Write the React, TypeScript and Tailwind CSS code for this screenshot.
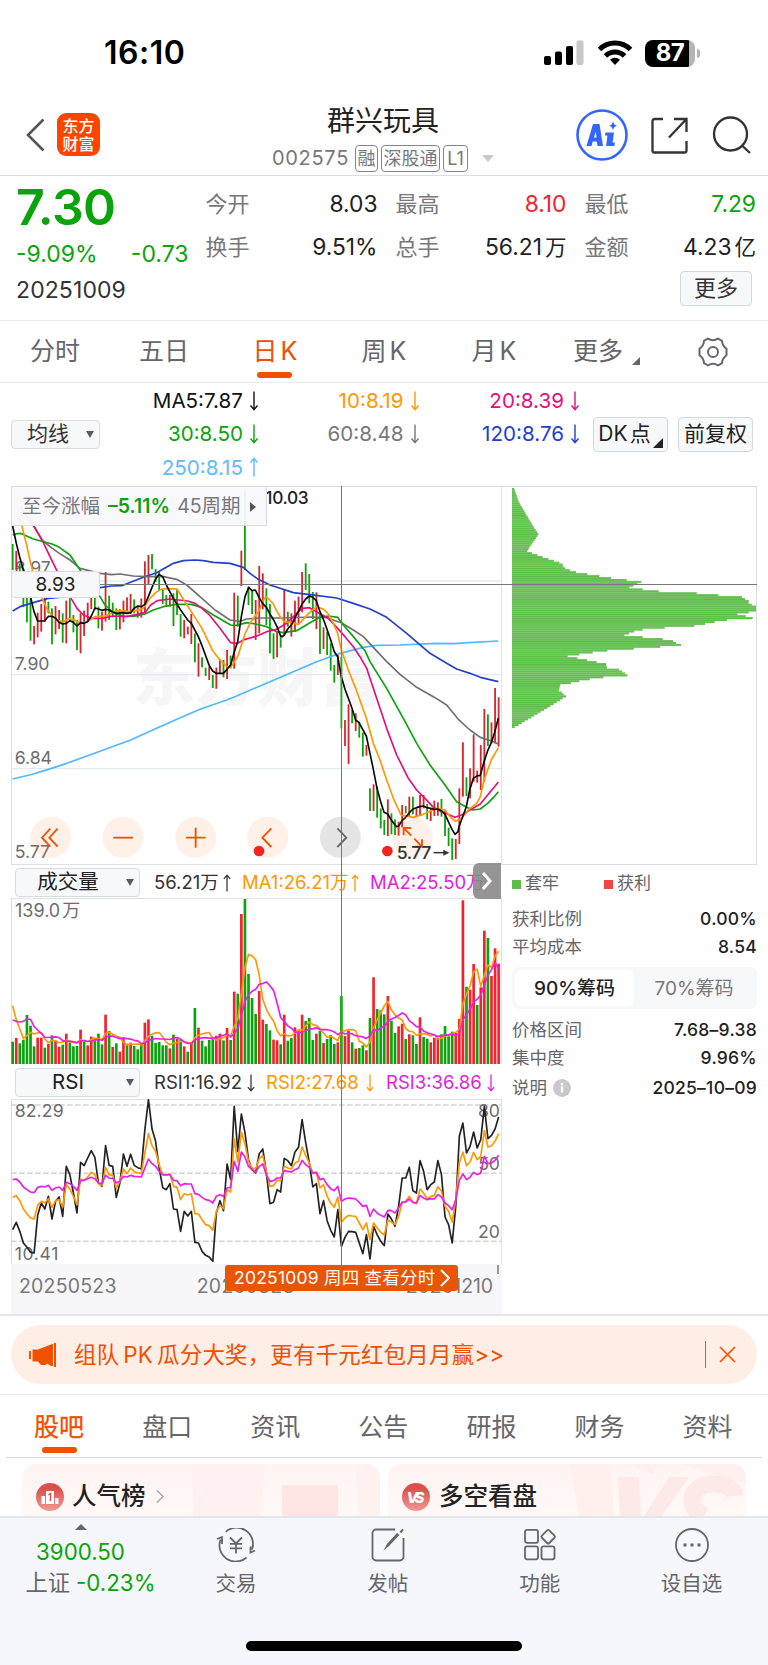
import type { ReactNode } from "react";
import clsx from "clsx";

const RED = "#d8242c";
const GREEN = "#0ba30b";
const PITCH = 10.72;
const FIRST_X = 38;

// one entry per session: direction, high, low (chart units)
const CANDLES = `G192-270 R213-270 G250-340 G270-381 G340-427 G350-482 R438-493 R398-472 R372-455 R350-425
G365-400 G385-493 R378-463 R390-447 G400-488 R362-490 G355-415 G405-457 G420-510 R400-520
R392-468 R368-425 R345-387 G345-390 G380-445 R395-452 R276-425 G347-420 G368-412 G385-450
R388-448 R362-427 R352-402 R342-402 G358-400 R378-413 R355-413 R244-398 R225-312 G222-268
G267-305 G276-332 G330-372 G345-377 R345-380 G340-438 G330-405 G402-470 R420-475 R440-463
R402-492 G460-547 R490-590 G532-562 G563-588 R560-600 G585-624 R563-626 R538-580 G540-592
R510-597 G527-565 R338-566 G347-440 R212-318 G28-270 G320-375 G330-402 R360-480 R258-460
R280-388 G325-435 G372-520 G460-537 R455-532 G465-503 R328-465 G395-440 R400-470 R362-455
R350-430 R276-397 G250-330 G282-370 G336-417 R337-447 G400-522 R442-507 G455-525 G490-572
G555-608 R522-585 G530-745 R720-798 R673-852 G690-730 R700-753 G725-773 G758-830 R795-827
G925-993 R913-993 G920-1013 G985-1045 G1020-1065 R958-1068 G1000-1063 G1018-1065 R1025-1067 R975-1042
G978-1000 R950-1010 G950-1003 R985-1010 R945-1007 R945-985 G972-1018 R985-1023 R962-1008 R967-1007
G957-1010 G990-1068 G1043-1098 G1075-1140 R1077-1137 R925-1092 R787-950 G892-948 R865-955 R763-905
R872-908 R795-930 R687-905 G703-798 R727-790 R624-790 R652-800`.split(/\s+/);

const VOLUME = `G546 R535 G551 G540 G466 G498 G560 R534 R534 G564 R552 G527 R542 R561 G555 R522 G548 G560 G559 R510
G542 R557 R531 G536 G522 G554 R465 G514 R562 G551 R576 R537 G552 R549 G559 G569 G552 R489 R479 G528
G550 G547 G557 G557 R566 G525 R537 G540 R560 G576 R548 G445 R504 G543 G560 G541 G534 R528 R522 G542
R505 G541 R396 G402 R163 G118 G343 G415 G463 R394 R480 G493 G512 R540 R542 G554 R465 G543 G535 R503
R510 R465 G484 G475 G541 R522 G513 R550 G538 G526 G553 R548 G409 R529 R514 G548 R567 G565 G557 R572
G475 R353 G448 G452 G464 R409 G483 G520 R500 R492 G538 R524 G527 G553 R473 G532 G537 R548 R534 R536
G524 G499 G530 G516 R520 R478 R122 G381 R390 R313 G436 R383 R213 G235 R349 R266 R312`.split(/\s+/);

const MA_LINES = [
    { color: "#52b8ff", d: "38,897 100,882 145,868 200,850 300,814 390,781 480,740 560,705 600,688 680,660 710,648 775,620 880,575 950,545 1020,520 1090,502 1130,496 1200,495 1310,490 1360,491 1420,487 1495,483" },
    { color: "#2340cc", d: "38,393 60,380 110,365 145,355 200,350 300,323 335,318 365,317 430,292 470,278 520,250 550,242 585,240 610,242 640,247 690,250 730,262 750,280 775,298 810,315 880,338 930,344 1010,354 1060,370 1110,387 1160,412 1220,460 1290,520 1340,550 1370,567 1410,580 1441,592 1495,605" },
    { color: "#707070", d: "90,115 102,138 124,178 150,200 178,220 210,240 240,265 300,280 335,284 360,282 400,288 440,290 490,290 530,298 560,315 600,350 645,390 690,420 720,424 740,417 780,414 850,414 935,411 980,413 1024,428 1060,450 1090,470 1120,502 1160,545 1200,583 1250,622 1300,650 1340,675 1375,718 1410,750 1441,772 1475,783 1495,792" },
    { color: "#0ba30b", d: "38,165 50,161 65,161 100,177 156,192 178,202 210,225 242,272 300,350 315,375 340,398 370,408 400,409 435,402 460,390 490,380 530,373 574,373 606,383 640,405 692,435 710,436 740,428 767,432 800,440 830,455 850,458 890,452 930,428 960,412 985,408 1013,412 1030,435 1060,470 1095,512 1110,545 1160,625 1210,715 1250,790 1290,855 1335,915 1370,965 1400,982 1418,990 1441,987 1463,970 1480,953 1495,935" },
    { color: "#e2107e", d: "60,80 102,140 124,175 150,230 172,275 210,350 231,385 250,405 274,415 306,415 338,408 381,410 435,398 452,375 472,362 510,357 563,363 585,370 606,385 628,405 660,445 692,488 713,490 735,478 765,470 778,465 800,455 830,448 860,430 895,395 908,385 928,383 949,395 985,415 1013,445 1035,470 1060,500 1080,530 1100,565 1120,625 1140,685 1160,745 1190,825 1225,895 1250,930 1275,955 1298,980 1325,995 1365,1012 1385,1005 1410,990 1441,972 1463,945 1480,925 1495,906" },
    { color: "#ff9800", d: "48,60 65,135 81,200 92,250 98,272 124,350 140,385 156,407 172,420 188,427 205,417 220,418 240,430 263,425 285,410 317,408 349,392 392,395 424,388 435,378 450,355 467,338 483,328 499,326 531,327 542,345 563,378 585,412 606,445 638,512 660,540 681,560 692,563 713,530 735,462 750,430 778,390 790,360 798,350 809,360 820,372 831,395 842,412 853,425 874,427 895,433 910,418 926,400 938,390 949,380 971,388 985,402 1000,430 1013,460 1024,510 1045,570 1067,625 1085,675 1099,715 1120,790 1140,840 1160,900 1180,955 1203,1005 1240,1012 1270,1003 1310,985 1335,990 1350,1010 1367,1024 1385,1015 1410,985 1430,970 1441,950 1452,900 1463,870 1474,840 1495,803" },
    { color: "#0a0a0a", d: "38,138 49,190 60,235 70,270 92,352 102,395 113,423 134,423 145,409 156,409 167,415 177,427 188,432 199,430 210,422 220,427 231,438 242,428 252,430 263,425 274,408 285,384 295,387 306,391 317,388 327,390 338,396 349,400 370,398 381,400 392,398 402,385 413,378 424,380 435,373 445,350 456,322 467,297 477,283 488,290 499,315 520,355 542,390 563,420 574,430 595,470 606,497 628,557 638,573 649,580 670,580 681,568 692,555 703,515 713,485 724,410 735,350 746,322 756,332 766,330 777,352 788,370 799,382 810,402 821,420 831,440 842,468 847,470 853,465 863,447 874,435 885,413 895,395 906,373 917,357 928,348 938,352 949,362 960,395 971,420 981,448 992,480 1003,515 1013,530 1024,590 1035,628 1045,655 1056,685 1067,720 1077,728 1088,748 1099,768 1110,820 1120,868 1131,925 1142,965 1152,997 1163,1002 1174,1020 1185,1035 1190,1040 1196,1038 1206,1022 1217,1012 1228,998 1239,987 1249,983 1260,980 1270,978 1281,983 1292,985 1302,988 1313,987 1324,992 1335,1003 1345,1025 1356,1048 1365,1063 1374,1055 1377,1040 1388,1010 1399,980 1409,930 1420,895 1431,888 1441,886 1452,845 1463,812 1474,788 1484,757 1495,715" },
];

const RSI1 = [
    510, 488, 515, 550, 563, 578, 580, 467, 430, 448, 410, 478, 425, 412, 470, 320, 345, 400, 460, 308, 318, 295, 273, 293, 370, 380, 258, 317, 320, 413, 370, 283, 320, 284,
    317, 324, 328, 210, 120, 208, 245, 325, 384, 390, 372, 448, 450, 515, 455, 469, 455, 548, 550, 575, 587, 592, 605, 460, 423, 453, 313, 360, 140, 275, 163, 218, 300, 330,
    340, 282, 268, 340, 432, 428, 390, 397, 296, 303, 318, 277, 263, 180, 248, 308, 382, 372, 462, 423, 483, 512, 532, 450, 560, 533, 515, 516, 518, 550, 582, 525, 598, 500,
    525, 545, 558, 463, 478, 500, 440, 355, 355, 323, 393, 400, 303, 335, 390, 375, 367, 303, 345, 472, 495, 550, 440, 230, 190, 280, 260, 217, 265, 240, 140, 237, 227, 208, 172,
];
const RSI2 = [
    413, 408, 423, 448, 462, 475, 478, 437, 425, 430, 417, 443, 423, 420, 442, 375, 388, 410, 435, 358, 362, 352, 338, 345, 372, 378, 323, 345, 347, 385, 365, 328, 342, 325,
    336, 340, 340, 280, 222, 258, 275, 315, 345, 347, 343, 380, 383, 420, 402, 406, 402, 462, 463, 480, 495, 498, 512, 455, 437, 447, 390, 397, 237, 307, 218, 252, 305, 325,
    327, 297, 288, 335, 380, 378, 362, 363, 320, 325, 328, 310, 305, 262, 287, 310, 342, 338, 385, 375, 410, 430, 443, 412, 488, 475, 467, 469, 470, 490, 510, 490, 540, 490,
    505, 518, 526, 482, 487, 495, 470, 430, 425, 410, 428, 432, 388, 400, 418, 410, 408, 381, 395, 440, 455, 487, 420, 310, 277, 318, 307, 278, 300, 290, 213, 262, 258, 245, 222,
];
const RSI3 = [
    360, 358, 367, 382, 390, 397, 399, 383, 380, 382, 377, 392, 385, 382, 392, 368, 372, 380, 392, 363, 362, 357, 353, 357, 370, 372, 347, 355, 356, 370, 365, 350, 352, 347,
    350, 351, 352, 325, 298, 312, 320, 335, 345, 346, 344, 362, 363, 378, 372, 373, 373, 402, 404, 413, 420, 422, 430, 410, 405, 410, 385, 383, 305, 335, 277, 292, 320, 330,
    338, 320, 313, 347, 365, 363, 355, 355, 333, 335, 337, 330, 325, 302, 315, 323, 340, 338, 360, 357, 375, 387, 393, 380, 425, 418, 415, 416, 418, 428, 440, 437, 470, 448,
    460, 467, 472, 452, 453, 460, 445, 427, 427, 418, 428, 430, 408, 415, 420, 417, 418, 405, 412, 430, 438, 450, 420, 362, 343, 360, 353, 338, 345, 340, 290, 312, 310, 302, 287,
];

const CHIPS = [
    6, 8, 10, 12, 14, 16, 18, 20, 23, 26, 30, 33, 37, 40, 43, 47, 50, 53, 57, 60, 64, 67, 71, 75, 79, 76, 72, 68, 64, 60, 56, 52, 49, 46,
    60, 76, 92, 109, 126, 142, 152, 154, 160, 174, 192, 226, 262, 297, 344, 388, 376, 364, 352, 392, 440, 554, 619, 690, 699, 710, 710, 719,
    732, 732, 732, 710, 676, 701, 722, 645, 608, 579, 547, 458, 392, 367, 351, 337, 392, 452, 483, 492, 507, 445, 365, 286, 242, 202, 167,
    196, 225, 254, 282, 283, 285, 321, 330, 339, 346, 274, 233, 202, 177, 145, 143, 142, 140, 149, 155, 162, 152, 144, 134, 125, 115, 106,
    96, 86, 77, 67, 58, 48, 38, 29, 19, 8,
];

const xAt = (i: number) => FIRST_X + i * PITCH;
const toPoints = (ys: number[]) => ys.map((y, i) => `${xAt(i).toFixed(1)},${y.toFixed(1)}`).join(" ");

function average(period: number, seed: number[]) {
    const tops = VOLUME.map((v) => Number(v.slice(1)));
    return tops.map((_, i) => {
        if (i < period - 1) return seed[i];
        const part = tops.slice(i - period + 1, i + 1);
        return part.reduce((a, b) => a + b, 0) / period;
    });
}

const VOL_MA5 = average(5, [438, 480, 508, 536]);
const VOL_MA10 = average(10, [481, 485, 487, 485, 478, 479, 500, 511, 521]);

function Arrow({ up, className }: { up?: boolean; className?: string }) {
    return (
        <svg viewBox="0 0 10 20" className={clsx("w-2.5 shrink-0", className)} fill="none" stroke="currentColor" strokeWidth="1.400">
            {up ? <path d="M5 19.5V1.5M1.500 5.500l3.500-4.200L8.500 5.500" /> : <path d="M5 .5v18M1.500 14.500l3.500 4.200L8.500 14.500" />}
        </svg>
    );
}

function Caret() {
    return <span className="h-0 w-0 border-x-4 border-t-[7px] border-x-transparent border-t-[#5b5b60]" />;
}

function StatusBar() {
    return (
        <div className="flex h-[104px] items-center justify-between pl-[104px] pr-[68px] pt-[2px]">
            <span className="text-[32px] font-semibold tracking-[0.5px] text-black">16:10</span>
            <div className="flex items-center">
                <svg width="40" height="26" viewBox="0 0 40 26">
                    <rect x="0" y="16" width="7" height="9" rx="2" />
                    <rect x="11" y="11.500" width="7" height="13.500" rx="2" />
                    <rect x="22" y="6" width="7" height="19" rx="2" />
                    <rect x="32.500" y="0.500" width="7" height="24.500" rx="2" fill="#c8c8c8" />
                </svg>
                <svg className="ml-[13px]" width="36" height="26" viewBox="0 0 36 26" fill="none" stroke="#000" strokeWidth="5">
                    <path d="M2.500 9.500a22 22 0 0 1 31 0" />
                    <path d="M8.500 16a13.500 13.500 0 0 1 19 0" />
                    <path d="M18 25l-5-5.300a7.200 7.200 0 0 1 10 0z" fill="#000" stroke="none" />
                </svg>
                <div className="ml-3 flex h-[27px] w-[50px] items-center justify-center rounded-[8px] bg-[linear-gradient(to_right,#000_88%,#b5b5b5_88%)] text-[24px] font-bold tracking-[-0.5px] text-white">
                    87
                </div>
                <span className="ml-[2px] h-[9px] w-[3px] rounded-r-full bg-[#b5b5b5]" />
            </div>
        </div>
    );
}

function Header() {
    const tag = "mr-[3px] h-[27px] rounded-[4px] border border-[#85858a] px-[1.500px] text-[18px] leading-[25px]";
    return (
        <div className="relative flex h-[72px] items-center border-b border-[#dcdce0] px-[25px]">
            <svg className="-mt-[9px]" width="20" height="34" viewBox="0 0 20 34" fill="none" stroke="#555" strokeWidth="2.600">
                <path d="M18.500 1.500 3 17l15.500 15.500" />
            </svg>
            <div className="-mt-[10px] ml-3 flex h-[43px] w-[43px] flex-col items-center justify-center rounded-[9px] bg-[#ff4400] text-[16px] font-medium leading-[18px] text-white">
                <span>东方</span>
                <span>财富</span>
            </div>
            <div className="absolute left-[264px] top-0 flex w-[238px] flex-col items-center">
                <div className="h-[34px] text-[28px] leading-[34px] text-[#222]">群兴玩具</div>
                <div className="mt-[6px] flex h-7 items-center text-[20px] text-[#77777c]">
                    <span className="mr-[6px] tracking-[0.7px]">002575</span>
                    <span className={tag}>融</span>
                    <span className={tag}>深股通</span>
                    <span className={clsx(tag, "mr-0 w-[25px] text-center")}>L1</span>
                    <span className="ml-[11px] h-0 w-0 border-x-[6px] border-t-[7px] border-x-transparent border-t-[#c9c9cc]" />
                </div>
            </div>
            <div className="-mt-[9px] ml-auto mr-[-9px] flex items-center">
                <svg width="52" height="52" viewBox="0 0 52 52">
                    <circle cx="26" cy="26" r="24.500" fill="none" stroke="#3365ff" strokeWidth="2.600" />
                    <path d="M10.500 37 17 15h6.500L27 37h-5.500l-.7-4.500h-4L15.500 37zM18 28.500h2.500l-.7-6zM32.500 23.500h-3l-.6 3h2.500l-1.300 10.500h8.300l.5-3.500h-2.300l1.400-10zM37 12c.7 3 1.500 4 4 4.800-2.500.8-3.300 1.800-4 4.700-.7-2.900-1.500-3.900-4-4.700 2.500-.8 3.300-1.800 4-4.800z" fill="#3365ff" />
                </svg>
                <svg className="ml-[23px]" width="37" height="37" viewBox="0 0 37 37" fill="none" stroke="#333" strokeWidth="2.300">
                    <path d="M12 2H3.500A2 2 0 0 0 1.500 4v29.500a2 2 0 0 0 2 2h30a2 2 0 0 0 2-2V24M23 2h12.500v13M35 2.500 18 20.500" />
                </svg>
                <svg className="ml-6" width="40" height="38" viewBox="0 0 40 38" fill="none" stroke="#333" strokeWidth="2.300">
                    <circle cx="18.500" cy="18" r="16.500" />
                    <path d="m30 29.500 8 7.500" />
                </svg>
            </div>
        </div>
    );
}

const STATS = [
    { label: "今开", value: "8.03", color: "text-[#222]" },
    { label: "最高", value: "8.10", color: "text-[#f5222d]" },
    { label: "最低", value: "7.29", color: "text-[#0ba30b]" },
    { label: "换手", value: "9.51%", color: "text-[#222]" },
    { label: "总手", value: "56.21", unit: "万", color: "text-[#222]" },
    { label: "金额", value: "4.23", unit: "亿", color: "text-[#222]" },
];

function Quote() {
    return (
        <div className="flex h-[145px] border-b border-[#ececef] pl-4 pr-[12px]">
            <div className="w-[172px] text-[#0ba30b]">
                <div className="mt-[6px] h-[50px] text-[50px] font-semibold leading-[51px] tracking-[-0.7px]">7.30</div>
                <div className="mt-[7px] flex h-[30px] items-center justify-between text-[23px]">
                    <span>-9.09%</span>
                    <span className="mr-[-1px]">-0.73</span>
                </div>
                <div className="mt-[6px] text-[23px] leading-[30px] tracking-[0.1px] text-[#333]">20251009</div>
            </div>
            <div className="ml-[18px] flex flex-1 flex-col">
                <div className="mt-[7px] grid grid-cols-[172px_171px_171.5px] gap-x-[18px] text-[22px]">
                    {STATS.map((s) => (
                        <div key={s.label} className="flex h-[43px] items-center justify-between whitespace-nowrap">
                            <span className="text-[#77777c]">{s.label}</span>
                            <span className={clsx("text-[22.800px]", s.color)}>
                                {s.value}
                                {s.unit && <span className="ml-[3px] text-[21.500px]">{s.unit}</span>}
                            </span>
                        </div>
                    ))}
                </div>
                <div className="mr-1 mt-[2px] flex h-[35px] w-[72px] items-center justify-center self-end rounded-[4px] border border-[#d5d7df] bg-[#f7f8fa] text-[22px] text-[#333]">更多</div>
            </div>
        </div>
    );
}

function PeriodTabs() {
    const tab = "w-[110px] text-center text-[25px]";
    return (
        <div className="flex h-[62px] items-center border-b border-[#ececef] text-[#66666a]">
            <span className={tab}>分时</span>
            <span className={clsx(tab, "-ml-px")}>五日</span>
            <span className={clsx(tab, "relative ml-px text-[#f05000]")}>
                日<span className="ml-[3px]">K</span>
                <i className="absolute -bottom-[8px] left-[37px] h-[6px] w-[35px] rounded-[3px] bg-[#f05000]" />
            </span>
            <span className={clsx(tab, "-ml-px")}>周<span className="ml-[3px]">K</span></span>
            <span className={tab}>月<span className="ml-[3px]">K</span></span>
            <span className={clsx(tab, "-ml-[6px]")}>更多</span>
            <svg className="-ml-[21px] mt-[18px]" width="8" height="8" viewBox="0 0 8 8" fill="#66666a">
                <path d="M8 0v8H0z" />
            </svg>
            <svg className="ml-[58px]" width="30" height="30" viewBox="0 0 30 30" fill="none" stroke="#66666a" strokeWidth="2">
                <path d="M10 1.500c3 2 7 2 10 0l4 2.300c.2 4 1.600 6 4.500 8v6.400c-2.900 2-4.300 4-4.500 8L20 28.500c-3-2-7-2-10 0l-4-2.300c-.2-4-1.600-6-4.500-8v-6.400c2.900-2 4.300-4 4.500-8z" strokeLinejoin="round" />
                <circle cx="15" cy="15" r="5" />
            </svg>
        </div>
    );
}

function MaLegend() {
    const button = "relative flex h-[35px] w-[75px] items-center justify-center rounded-[4px] border border-[#d5d7df] bg-[#f7f8fa] text-[21px] text-[#222]";
    const item = (text: string, color: string, up = false) => (
        <span className={clsx("flex items-center justify-end", color)}>
            {text}
            <Arrow up={up} className="ml-[6px] h-5" />
        </span>
    );
    return (
        <div className="flex h-[104px] items-center pl-[11px] pr-[15px]">
            <div className="flex h-[29px] w-[89px] items-center justify-between rounded-[4px] border border-[#d9dbe2] bg-[#f7f8fa] pl-[15px] pr-[5px] text-[21px] text-[#333]">
                均线
                <Caret />
            </div>
            <div className="grid w-[480px] grid-cols-[159px_160.5px_160.5px] text-[20.600px] leading-[33.300px]">
                {item("MA5:7.87", "text-[#111]")}
                {item("10:8.19", "text-[#ff9800]")}
                {item("20:8.39", "text-[#e2107e]")}
                {item("30:8.50", "text-[#0ba30b]")}
                {item("60:8.48", "text-[#77777c]")}
                {item("120:8.76", "text-[#2340cc]")}
                {item("250:8.15", "text-[#5cbcff]", true)}
            </div>
            <div className={clsx(button, "ml-[13px] pr-[12px]")}>
                DK<span className="ml-[2px]">点</span>
                <svg className="absolute bottom-[3px] right-[4px]" width="10" height="10" viewBox="0 0 10 10">
                    <path d="M10 0v10H0z" fill="#222" />
                </svg>
            </div>
            <div className={clsx(button, "ml-[10px]")}>前复权</div>
        </div>
    );
}

const ROUND_BUTTONS = [
    { cx: 153, d: "M151 1046l-25 27 25 27M173 1046l-25 27 25 27" },
    { cx: 369, d: "M340 1073h59" },
    { cx: 587, d: "M558 1073h59M587 1043v60" },
    { cx: 803, d: "M814 1045l-27 28 27 28" },
    { cx: 1021, d: "M1012 1045l27 28-27 28", dim: true },
    { cx: 1237, d: "M1234 1067l-22-22M1211 1066v-22h22M1243 1076l22 23M1266 1078v22h-22" },
];

function CandleChart() {
    return (
        <svg viewBox="33 18 1473 1134" className="h-[378px] w-[491px]" fontFamily="Inter, 'Noto Sans CJK SC', sans-serif">
            <text x="398" y="663" fontSize="187" fontWeight="900" fill="#f6f6f7">东方财富</text>
            <path d="M33 303H1503M33 584H1503M33 866H1503" stroke="#e6eaf0" strokeWidth="4" />
            <g fontSize="53" fill="#6c6c70">
                <text x="44" y="281">8.97</text>
                <text x="44" y="571">7.90</text>
                <text x="44" y="853">6.84</text>
                <text x="44" y="1135">5.77</text>
            </g>
            {CANDLES.map((c, i) => {
                const [high, low] = c.slice(1).split("-").map(Number);
                return <rect key={i} x={xAt(i) - 2.7} y={high} width="5.400" height={low - high} fill={c[0] === "R" ? RED : GREEN} />;
            })}
            {MA_LINES.map((line) => (
                <polyline key={line.color} points={line.d} fill="none" stroke={line.color} strokeWidth="5" strokeLinejoin="round" />
            ))}
            {ROUND_BUTTONS.map((b) => (
                <g key={b.cx} fill="none">
                    <circle cx={b.cx} cy="1072" r="61.500" fill={b.dim ? "#000" : "#ff5a00"} fillOpacity={b.dim ? 0.1 : 0.09} />
                    <path d={b.d} stroke={b.dim ? "#666" : "#f05000"} strokeWidth="5.500" />
                </g>
            ))}
            <circle cx="777" cy="1113" r="16" fill="#f9231e" />
            <circle cx="1162" cy="1113" r="16" fill="#f9231e" />
            <text x="1190" y="1137" fontSize="53" fontWeight="500" fill="#333" textLength="104">5.77</text>
            <path d="M1301 1118h38" stroke="#333" strokeWidth="4.500" />
            <path d="M1348 1118l-18-9v18z" fill="#333" />
            <text x="796" y="71" fontSize="52" fontWeight="500" fill="#222" textLength="130">10.03</text>
        </svg>
    );
}

function VolumeChart() {
    return (
        <svg viewBox="33 115 1473 498" className="h-[166px] w-[491px]">
            {VOLUME.map((v, i) => {
                const top = Number(v.slice(1));
                return <rect key={i} x={xAt(i) - 4} y={top} width="8" height={613 - top} fill={v[0] === "R" ? "#f5222d" : GREEN} />;
            })}
            <polyline points={toPoints(VOL_MA5)} fill="none" stroke="#ff9800" strokeWidth="5" strokeLinejoin="round" />
            <polyline points={toPoints(VOL_MA10)} fill="none" stroke="#e91ee9" strokeWidth="5" strokeLinejoin="round" />
        </svg>
    );
}

function RsiChart() {
    return (
        <svg viewBox="33 118 1473 495" className="h-[165px] w-[491px]" fontFamily="Inter, sans-serif">
            <path d="M33 136H1503M33 341H1503M33 545H1503" stroke="#d3d3d5" strokeWidth="4.500" strokeDasharray="17 7" />
            <g fontSize="53" fill="#6c6c70">
                <text x="44" y="172" textLength="147">82.29</text>
                <text x="44" y="602" textLength="131">10.41</text>
                <text x="1500" y="172" textAnchor="end">80</text>
                <text x="1500" y="331" textAnchor="end">50</text>
                <text x="1500" y="534" textAnchor="end">20</text>
            </g>
            <g fill="none" strokeWidth="5" strokeLinejoin="round">
                <polyline points={toPoints(RSI1)} stroke="#222" />
                <polyline points={toPoints(RSI2)} stroke="#ff9800" />
                <polyline points={toPoints(RSI3)} stroke="#e91ee9" />
            </g>
        </svg>
    );
}

function IndicatorBar({ name, children }: { name: string; children: ReactNode }) {
    return (
        <div className="flex h-[33px] items-center pl-1 pt-[2px]">
            <div className="relative flex h-[29px] w-[125px] shrink-0 items-center justify-center rounded-[4px] border border-[#d9dbe2] bg-[#f7f8fa] pr-[19px] text-[20.500px] text-[#222]">
                {name}
                <span className="absolute right-[5px] top-[10px] flex"><Caret /></span>
            </div>
            {children}
        </div>
    );
}

function ChipPanel() {
    const row = (label: ReactNode, value: string) => (
        <div className="flex h-7 items-center justify-between">
            <span className="flex items-center text-[#66666a]">{label}</span>
            <span className="font-medium tracking-[0.25px] text-[#222]">{value}</span>
        </div>
    );
    return (
        <div className="w-[255px] text-[17.500px]">
            <div className="h-[379px] border-y border-r border-[#d9dbe5] pl-[10px] pt-px">
                <svg viewBox="36 24 738 1125" className="h-[375px] w-[246px]">
                    {CHIPS.map((w, k) => (
                        <g key={k}>
                            <rect x="36" y={22 + k * 5.73} width={w} height="5.800" fill={k % 2 ? "#61bf4d" : "#5dbd49"} />
                            <rect x="36" y={22 + k * 5.73} width={w} height="2" fill="#72c761" />
                        </g>
                    ))}
                </svg>
            </div>
            <div className="pl-[10px]">
                <div className="mt-[5px] flex h-[28px] items-center text-[17px] text-[#66666a]">
                    <i className="mr-1 h-[9px] w-[9px] bg-[#5dbd49]" />套牢
                    <i className="ml-[45px] mr-1 h-[9px] w-[9px] bg-[#ee4545]" />获利
                </div>
                <div className="mt-[7px]">
                    {row("获利比例", "0.00%")}
                    {row("平均成本", "8.54")}
                </div>
                <div className="mt-[6px] flex h-[42px] rounded-[7px] bg-[#f7f8fa] p-[3px] text-[19px] leading-[37px]">
                    <span className="w-[119px] rounded-[6px] bg-white text-center font-medium text-[#222]">90%筹码</span>
                    <span className="flex-1 text-center text-[#77777c]">70%筹码</span>
                </div>
                <div className="mt-[7px]">
                    {row("价格区间", "7.68–9.38")}
                    {row("集中度", "9.96%")}
                    <div className="mt-[2px]">
                        {row(
                            <>
                                说明
                                <svg className="ml-[6px]" width="18" height="18" viewBox="0 0 18 18">
                                    <circle cx="9" cy="9" r="9" fill="#c9c9cc" />
                                    <path d="M9 4v2.500M9 7.500v6" stroke="#fff" strokeWidth="2.200" />
                                </svg>
                            </>,
                            "2025–10–09",
                        )}
                    </div>
                </div>
            </div>
        </div>
    );
}

function Charts() {
    return (
        <div className="relative flex h-[828px] pl-[11px]">
            <div className="w-[491px]">
                <div className="h-[379px] border-b border-[#dfe0e6] shadow-[inset_0_1px_#d9dbe5,inset_1px_0_#d9dbe5,inset_-1px_0_#e2e3e8]">
                    <CandleChart />
                </div>
                <IndicatorBar name="成交量">
                    <div className="flex items-center whitespace-nowrap text-[18.500px] text-[#333]">
                        <span className="ml-[14px] w-[63px]">56.21万</span>
                        <Arrow up className="ml-[5px] h-[18px]" />
                        <span className="ml-[10px] w-[104px] text-[#ff9800]">MA1:26.21万</span>
                        <Arrow up className="ml-[4px] h-[18px] text-[#ff9800]" />
                        <span className="ml-[10px] w-[110px] text-[#e01ee0]">MA2:25.50万</span>
                        <Arrow up className="h-[18px] text-[#e01ee0]" />
                    </div>
                </IndicatorBar>
                <div className="relative h-[166px] shadow-[inset_0_1px_#e2e3e8,inset_1px_0_#d9dbe5,inset_-1px_0_#e2e3e8]">
                    <VolumeChart />
                    <span className="absolute left-1 top-[1px] text-[18px] leading-[23px] text-[#6c6c70]">139.0<span className="ml-[2px]">万</span></span>
                </div>
                <div className="py-[1px]">
                    <IndicatorBar name="RSI">
                        <div className="flex items-center whitespace-nowrap text-[18.500px] text-[#333]">
                            <span className="ml-[14px] w-[87px]">RSI1:16.92</span>
                            <Arrow className="ml-[5px] h-[18px]" />
                            <span className="ml-[10px] w-[93px] text-[#ff9800]">RSI2:27.68</span>
                            <Arrow className="ml-[6px] h-[18px] text-[#ff9800]" />
                            <span className="ml-[11px] w-[96px] text-[#e01ee0]">RSI3:36.86</span>
                            <Arrow className="ml-[4px] h-[18px] text-[#e01ee0]" />
                        </div>
                    </IndicatorBar>
                </div>
                <div className="h-[165px] shadow-[inset_0_1px_#e2e3e8,inset_1px_0_#d9dbe5,inset_-1px_0_#e2e3e8]">
                    <RsiChart />
                </div>
                <div className="flex h-[50px] justify-between bg-[#f7f7fa] pl-[8px] pr-[9px] text-[19.500px] leading-[44px] tracking-[0.2px] text-[#77777c]">
                    <span>20250523</span>
                    <span className="mr-[31px]">20250828</span>
                    <span className="tracking-[-0.1px]">20251210</span>
                </div>
            </div>
            <ChipPanel />

            {/* crosshair */}
            <div className="absolute left-[11px] top-[98px] h-px w-[746px] bg-[#777]" />
            <div className="absolute left-[341px] top-0 h-[779px] w-px bg-[#777]" />
            <div className="absolute left-[11px] top-[85px] flex h-[27px] w-[89px] items-center justify-center rounded-[4px] border border-[#d9dbe2] bg-[#f7f8fa] pt-px text-[19px] text-[#222]">8.93</div>
            <div className="absolute left-[11px] top-0 flex h-[40px] w-[256px] items-center whitespace-nowrap border border-[#d9dbe5] bg-[#f9f9fb]/95 pl-[10px] pt-[2px] text-[19.500px] text-[#77777c]">
                至今涨幅
                <span className="ml-2 font-semibold text-[#0ba30b]">–5.11%</span>
                <span className="ml-[7px]">45周期</span>
                <i className="ml-[9px] h-0 w-0 border-y-[5px] border-l-[6px] border-y-transparent border-l-[#555]" />
            </div>
            <div className="absolute left-[473px] top-[377px] flex h-9 w-7 items-center justify-center rounded-l-[6px] bg-[#8a8a8a]/90">
                <svg width="10" height="18" viewBox="0 0 10 18" fill="none" stroke="#fff" strokeWidth="3"><path d="m1 1 7 8-7 8" /></svg>
            </div>
            <div className="absolute left-[225px] top-[779px] flex h-[26px] w-[233px] items-center whitespace-nowrap rounded-[3px] bg-[#ea5504] pl-[9px] text-[17.500px] tracking-[0.22px] text-white">
                20251009 周四 查看分时
                <svg className="ml-[5px]" width="10" height="18" viewBox="0 0 10 18" fill="none" stroke="#fff" strokeWidth="2"><path d="m1 1 8 8-8 8" /></svg>
            </div>
            <div className="absolute left-[497px] top-[779px] h-[9px] w-[2px] bg-[#999]" />
        </div>
    );
}

function Banner() {
    return (
        <div className="border-b border-t-2 border-b-[#e6e6ea] border-t-[#e4e4ea] px-[11px] pb-[10px] pt-[9px]">
            <div className="flex h-[59px] items-center rounded-full bg-[#feeee6] pl-[18px] pr-[21px] text-[22.500px] text-[#f05000]">
                <svg width="27" height="24" viewBox="0 0 27 24" fill="currentColor">
                    <path d="M0 8h2v8H0zM3.500 6.500h5.500L24 .8V23h-2l-4-2.500-1.500 1.500h-4.500l-3-3.500H3.500zM25 0h2v24h-2z" />
                </svg>
                <span className="ml-[18px] whitespace-nowrap tracking-[0.15px]">
                    组队<span className="mx-[4px]">PK</span>瓜分大奖，更有千元红包月月赢&gt;&gt;
                </span>
                <i className="ml-auto h-[27px] w-[1.500px] bg-[#f05000]" />
                <svg className="ml-[13px]" width="17" height="17" viewBox="0 0 17 17" stroke="currentColor" strokeWidth="1.600"><path d="m1 1 15 15M16 1 1 16" /></svg>
            </div>
        </div>
    );
}

function SectionTabs() {
    return (
        <div className="mx-[6px] flex h-[63px] items-center border-b border-[#dcdce0] pt-[3px] text-[25px] text-[#66666a]">
            {["股吧", "盘口", "资讯", "公告", "研报", "财务", "资料"].map((name, i) => (
                <span key={name} className={clsx("relative -left-px w-[108.100px] shrink-0 text-center", i === 0 && "text-[#f05000] [-webkit-text-stroke:0.3px]")}>
                    {name}
                    {i === 0 && <i className="absolute -bottom-[7px] left-[37px] h-[6px] w-[35px] rounded-[3px] bg-[#f05000]" />}
                </span>
            ))}
        </div>
    );
}

function BadgeFill({ id }: { id: string }) {
    return (
        <>
            <linearGradient id={id} x1="0" y1="0" x2="0" y2="1">
                <stop offset="0.2" stopColor="#da504c" />
                <stop offset="1" stopColor="#f09a95" />
            </linearGradient>
            <circle cx="14" cy="14" r="14" fill={`url(#${id})`} />
        </>
    );
}

function Cards() {
    const card = "relative flex h-[52px] w-[358px] items-center overflow-hidden rounded-t-[14px] bg-[linear-gradient(to_bottom,#fff4f2,#fff9f8)] pl-[14px] pt-[13px] font-medium text-[#222]";
    return (
        <div className="flex gap-2 pl-[22px] pt-[6px]">
            <div className={card}>
                <svg className="absolute right-0 top-0" width="187" height="52" viewBox="0 0 187 52">
                    <path d="M0 0h72l-4 52H0z" fill="#fff1ef" />
                    <path d="M89 21h56v31H89z" fill="#fde6e4" />
                    <path d="M162 0h25v52h-21z" fill="#fff1ef" />
                </svg>
                <svg className="relative" width="28" height="28" viewBox="0 0 28 28">
                    <BadgeFill id="rank" />
                    <path d="M5.500 13H9v8H5.500zM10 8h8v13h-8zM19 15h3.500v6H19z" fill="#fff" />
                    <path d="m12.500 12 2-1.500V18" fill="none" stroke="#dc5650" strokeWidth="1.500" />
                </svg>
                <span className="relative ml-2 text-[24.500px]">人气榜</span>
                <svg className="relative ml-[10px]" width="8" height="13" viewBox="0 0 8 13" fill="none" stroke="#aaa" strokeWidth="1.500"><path d="m1 .5 6 6-6 6" /></svg>
            </div>
            <div className={card}>
                <svg className="absolute right-0 top-0" width="176" height="52" viewBox="0 0 176 52">
                    <path d="M0 0h40l4 52H9zM60 0h30l-8 10zM112 0h64v20z" fill="#fff0ee" />
                    <path d="M48 13h21l2 39H50zM99 13h20L92 52H74z" fill="#fde9e7" />
                    <path d="M165 32c-2-16-43-17-43 4 0 8 5 12 12 16" fill="none" stroke="#fde9e7" strokeWidth="17" />
                </svg>
                <svg className="relative" width="28" height="28" viewBox="0 0 28 28">
                    <BadgeFill id="versus" />
                    <text x="13.500" y="19.500" fontSize="15" fontWeight="800" fontStyle="italic" fill="#fff" textAnchor="middle" textLength="18">VS</text>
                </svg>
                <span className="relative ml-[9px] text-[24.500px]">多空看盘</span>
            </div>
        </div>
    );
}

function BottomBar() {
    const item = "flex w-[151.900px] flex-col items-center text-[20.500px] leading-[24px] text-[#66666a]";
    const icon = { width: 40, height: 34, viewBox: "0 0 40 34", fill: "none", stroke: "#66666a", strokeWidth: 1.8 };
    return (
        <div className="relative flex h-[149px] border-t-2 border-[#e4e5ea] bg-[#f6f7fa]">
            <div className="flex w-[160px] shrink-0 flex-col items-center pl-px">
                <span className="mt-[6px] h-0 w-0 border-x-[6px] border-b-[6px] border-x-transparent border-b-[#66666a]" />
                <span className="mt-[7px] text-[22.300px] leading-[30px] text-[#0ba30b]">3900.50</span>
                <span className="mt-px whitespace-nowrap pl-5 text-[22.300px] leading-[30px] text-[#66666a]">
                    上证<span className="ml-[6px] text-[#0ba30b]">-0.23%</span>
                </span>
            </div>
            <div className="flex pt-[10px]">
                <div className={item}>
                    <svg {...icon}>
                        <path d="M9.800 3.800A16.300 16.300 0 0 1 36 21.500M4.500 11.500A16.300 16.300 0 0 0 30.500 29.500M1 11l5-2v7M39 22.500l-4.500 2v-6M14 9.500l6 6 6-6M20 15.500v10M14 15.800h12M14 20.300h12" />
                    </svg>
                    <span className="mt-[10px]">交易</span>
                </div>
                <div className={item}>
                    <svg {...icon}>
                        <path d="M27 1.500H8a3.500 3.500 0 0 0-3.500 3.500v24A3.500 3.500 0 0 0 8 32.500h24a3.500 3.500 0 0 0 3.500-3.500V10" />
                        <path d="M15.500 22.500 19 16 29 5l2.500 2L21 18zM31.500 3.500 34.500.8l1.300 1.300L33 5.200z" fill="#66666a" stroke="none" />
                    </svg>
                    <span className="mt-[10px]">发帖</span>
                </div>
                <div className={item}>
                    <svg {...icon}>
                        <rect x="5" y="1.800" width="13" height="13" rx="2" />
                        <rect x="5" y="18.300" width="13" height="13" rx="2" />
                        <rect x="21.500" y="18.300" width="13" height="13" rx="2" />
                        <rect x="23" y="3.500" width="10.400" height="10.400" rx="1.500" transform="rotate(45 28.200 8.700)" />
                    </svg>
                    <span className="mt-[10px]">功能</span>
                </div>
                <div className={item}>
                    <svg {...icon}>
                        <circle cx="20" cy="17" r="16" />
                        <path d="M11.500 17h3M18.500 17h3M25.500 17h3" strokeWidth="3" />
                    </svg>
                    <span className="mt-[10px]">设自选</span>
                </div>
            </div>
            <div className="absolute bottom-[14px] left-[246px] h-[10px] w-[276px] rounded-full bg-black" />
        </div>
    );
}

export default function App() {
    return (
        <div className="h-[1665px] w-[768px] overflow-hidden bg-white [font-family:Inter,'Noto_Sans_CJK_SC',sans-serif] [text-autospace:no-autospace]">
            <StatusBar />
            <Header />
            <Quote />
            <PeriodTabs />
            <div className="-mt-px">
                <MaLegend />
            </div>
            <Charts />
            <Banner />
            <SectionTabs />
            <Cards />
            <BottomBar />
        </div>
    );
}
